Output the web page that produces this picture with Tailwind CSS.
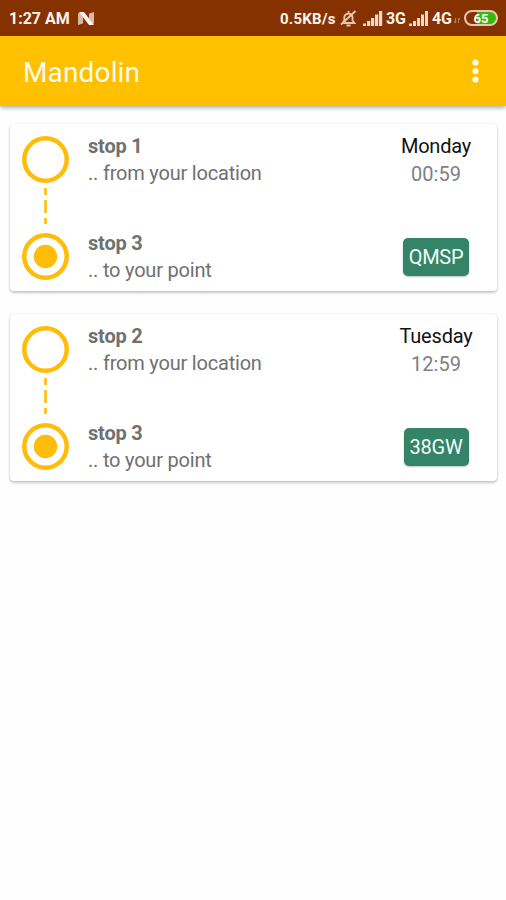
<!DOCTYPE html>
<html lang="en">
<head>
    <meta charset="UTF-8">
    <meta name="viewport" content="width=device-width, initial-scale=1.0">
    <title>Mandolin</title>
    <script src="https://cdn.jsdelivr.net/npm/@tailwindcss/browser@4"></script>
</head>
<body class="bg-[#fefefe] min-h-screen overflow-hidden font-['Roboto',sans-serif]">
    <!-- Status bar -->
    <div class="flex items-center h-9 bg-[#853100] text-[#fff3ec] text-base font-bold whitespace-nowrap">
        <span class="ml-[9px] w-[61px] mt-0.5">1:27 AM</span>
        <svg class="ml-2" width="17" height="13" viewBox="0 0 17 13">
            <path d="M0 1.500l5-1.500v11.500L0 13zM11 1.500L16 0v11.500L11 13z" fill="#d9b7a6"/>
            <path d="M1 0h5l10 13h-5z" fill="#fff3ec"/>
        </svg>
        <span class="ml-[185px] w-[56px] mt-0.5 text-[15px] tracking-[0.25px]">0.5KB/s</span>
        <svg class="ml-1" width="17" height="17" viewBox="0 0 17 17" fill="none" stroke="#e8c8b4" stroke-width="1.8">
            <path d="M2.500 13h12l-2-2.500V7a4.200 4.200 0 0 0-8.200 0v3.500zM8.500 3V1M6.500 15.500h4M1 14.500L15.500 1"/>
        </svg>
        <svg class="ml-1.5" width="20" height="15" viewBox="0 0 20 15" fill="#f3d9ca">
            <path d="M0 12.500h3V15H0zM4 10h3.200v5H4zM8 7h3.200v8H8zM12 3.500h3.200V15H12zM16 0h3.200v15H16z"/>
        </svg>
        <span class="ml-[3px] w-[20px] mt-0.5 tracking-[-0.2px]">3G</span>
        <svg class="ml-[3px]" width="20" height="15" viewBox="0 0 20 15" fill="#f3d9ca">
            <path d="M0 12.500h3V15H0zM4 10h3v5H4zM8 7h3v8H8zM12 3.500h3V15h-3zM16 0h3v15h-3z"/>
        </svg>
        <span class="ml-[3px] w-[20px] mt-0.5 tracking-[-0.2px]">4G</span>
        <svg class="ml-0.5 mt-1.5" width="6" height="6" viewBox="0 0 6 6" stroke="#b17b58" stroke-width="1.200" fill="none">
            <path d="M1.500 0v5M0 3.500l1.500 1.500M4.500 5V0l1.500 1.500"/>
        </svg>
        <div class="ml-1 flex items-center justify-center w-[34px] h-4 rounded-full border-2 border-[#edc5ad] bg-linear-to-r from-[#853100] from-35% to-[#36b812] to-35% text-[13px] leading-none text-white">65</div>
    </div>

    <!-- App bar -->
    <header class="flex items-center justify-between h-[70px] pl-[23px] pr-[27px] bg-[#ffc000] text-[#fffbea] shadow-[0_2px_4px_rgba(0,0,0,0.3)]">
        <h1 class="text-[28px] leading-8 tracking-[0.15px] mt-[3px]">Mandolin</h1>
        <svg width="7" height="24" viewBox="0 0 7 24" fill="#fffbea">
            <circle cx="3.500" cy="3.500" r="3.100"/>
            <circle cx="3.500" cy="12" r="3.100"/>
            <circle cx="3.500" cy="20.500" r="3.100"/>
        </svg>
    </header>

    <!-- Trips -->
    <main class="flex flex-col gap-[23px] pt-[18px] pl-[10px] pr-[9px] text-[20px] leading-[27px] text-[#707070]">
        <section class="flex h-[167px] rounded-[4px] bg-white pl-3 shadow-[0_2px_3px_rgba(0,0,0,0.2),0_0_2px_rgba(0,0,0,0.14)]">
            <svg class="mt-3 shrink-0" width="47" height="144" viewBox="0 0 47 144" fill="none" stroke="#ffbc08" stroke-width="4.500">
                <circle cx="23.500" cy="23.500" r="21.200"/>
                <path d="M23.500 52v7M23.500 64v13M23.500 82v6" stroke-width="2.600"/>
                <circle cx="23.500" cy="120.500" r="21.200"/>
                <circle cx="23.500" cy="120.500" r="11.700" fill="#ffbc08" stroke="none"/>
            </svg>
            <div class="flex flex-col gap-[43px] pt-[9px] ml-[19px] grow tracking-[-0.2px]">
                <div>
                    <p class="font-bold">stop 1</p>
                    <p>.. from your location</p>
                </div>
                <div>
                    <p class="font-bold">stop 3</p>
                    <p>.. to your point</p>
                </div>
            </div>
            <div class="flex flex-col items-center w-[122px] pt-[9px]">
                <p class="text-[#111] tracking-[-0.2px]">Monday</p>
                <p class="text-[#808080] mt-px">00:59</p>
                <span class="flex items-center justify-center w-[66px] h-[38px] mt-[50px] pt-px rounded-[5px] bg-[#348467] text-[#f3fffa] tracking-[-0.3px] shadow-[0_1px_2px_rgba(0,0,0,0.25)]">QMSP</span>
            </div>
        </section>

        <section class="flex h-[167px] rounded-[4px] bg-white pl-3 shadow-[0_2px_3px_rgba(0,0,0,0.2),0_0_2px_rgba(0,0,0,0.14)]">
            <svg class="mt-3 shrink-0" width="47" height="144" viewBox="0 0 47 144" fill="none" stroke="#ffbc08" stroke-width="4.500">
                <circle cx="23.500" cy="23.500" r="21.200"/>
                <path d="M23.500 52v7M23.500 64v13M23.500 82v6" stroke-width="2.600"/>
                <circle cx="23.500" cy="120.500" r="21.200"/>
                <circle cx="23.500" cy="120.500" r="11.700" fill="#ffbc08" stroke="none"/>
            </svg>
            <div class="flex flex-col gap-[43px] pt-[9px] ml-[19px] grow tracking-[-0.2px]">
                <div>
                    <p class="font-bold">stop 2</p>
                    <p>.. from your location</p>
                </div>
                <div>
                    <p class="font-bold">stop 3</p>
                    <p>.. to your point</p>
                </div>
            </div>
            <div class="flex flex-col items-center w-[122px] pt-[9px]">
                <p class="text-[#111] tracking-[-0.2px]">Tuesday</p>
                <p class="text-[#808080] mt-px">12:59</p>
                <span class="flex items-center justify-center w-[65px] h-[38px] mt-[50px] pt-px rounded-[5px] bg-[#348467] text-[#f3fffa] tracking-[-0.2px] shadow-[0_1px_2px_rgba(0,0,0,0.25)]">38GW</span>
            </div>
        </section>
    </main>
</body>
</html>
